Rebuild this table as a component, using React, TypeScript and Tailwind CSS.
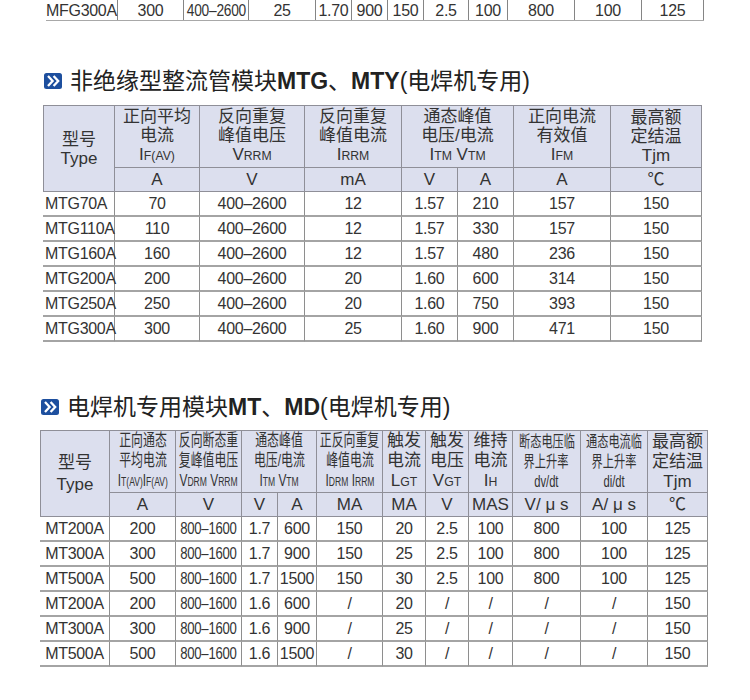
import React from "react";

const FONT = "font-['Liberation_Sans','Noto_Sans_CJK_SC',sans-serif]";

function Icon() {
  return (
    <svg width="18" height="16" viewBox="0 0 18 16" className="shrink-0">
      <rect x="0" y="0" width="18" height="16" rx="2.5" fill="#1d4f9e" />
      <path d="M4 3 L8.6 8 L4 13" stroke="#fff" strokeWidth="2.3" fill="none" strokeLinejoin="miter" />
      <path d="M9.6 3 L14.2 8 L9.6 13" stroke="#fff" strokeWidth="2.3" fill="none" strokeLinejoin="miter" />
    </svg>
  );
}

function Sub({ big, small }: { big: string; small: string }) {
  return (
    <span>
      {big}
      <span className="text-[0.72em]">{small}</span>
    </span>
  );
}

const topCols: [number, string, string][] = [
  [72, "MFG300A", "left"],
  [66, "300", "c"],
  [65, "400–2600", "cond"],
  [67, "25", "c"],
  [36, "1.70", "c"],
  [36, "900", "c"],
  [36, "150", "c"],
  [45, "2.5", "c"],
  [39, "100", "c"],
  [67, "800", "c"],
  [67, "100", "c"],
  [62, "125", "c"],
];

function TopRow() {
  return (
    <div className="ml-[46px] flex h-[21px] w-[658px] border-b border-[#a8a8a8]">
      {topCols.map(([w, t, a], i) => (
        <div
          key={i}
          style={{ width: w }}
          className={`flex h-full shrink-0 items-center border-r border-[#858585] pt-[2px] text-[16px] tracking-[-0.3px] text-[#333] ${
            a === "left" ? "justify-start" : "justify-center"
          }`}
        >
          {a === "cond" ? (
            <span className="inline-block whitespace-nowrap [transform:scaleX(0.86)]">{t}</span>
          ) : (
            <span className="whitespace-nowrap">{t}</span>
          )}
        </div>
      ))}
    </div>
  );
}

function Heading({ children, ml }: { children: React.ReactNode; ml: string }) {
  return (
    <div className={`flex h-[30px] items-center ${ml}`}>
      <Icon />
      <span className="ml-[8px] whitespace-nowrap text-[23px] leading-[30px] text-[#222]">{children}</span>
    </div>
  );
}

const HB = "border-[#8f8f98] bg-[#dcdfee]";
const DB = "border-[#a4a4a4]";
const VB = "border-r-[#8e8e8e]";

function H1Cell({ lines, cls = "" }: { lines: React.ReactNode[]; cls?: string }) {
  return (
    <div
      className={`flex flex-col items-center justify-center border-r border-b border-t ${HB} text-[17px] leading-[19px] text-[#333] ${cls}`}
    >
      {lines.map((l, i) => (
        <div key={i} className="whitespace-nowrap">
          {l}
        </div>
      ))}
    </div>
  );
}

function UnitCell({ t }: { t: React.ReactNode }) {
  return (
    <div className={`flex items-center justify-center border-r border-b ${HB} text-[17px] text-[#333]`}>
      <span className="whitespace-nowrap">{t}</span>
    </div>
  );
}

const t1Data = [
  ["MTG70A", "70", "400–2600", "12", "1.57", "210", "157", "150"],
  ["MTG110A", "110", "400–2600", "12", "1.57", "330", "157", "150"],
  ["MTG160A", "160", "400–2600", "12", "1.57", "480", "236", "150"],
  ["MTG200A", "200", "400–2600", "20", "1.60", "600", "314", "150"],
  ["MTG250A", "250", "400–2600", "20", "1.60", "750", "393", "150"],
  ["MTG300A", "300", "400–2600", "25", "1.60", "900", "471", "150"],
];

function Table1() {
  return (
    <div className="ml-[43px] grid w-[659px] grid-cols-[72px_85px_105px_97px_56px_56px_97px_91px] grid-rows-[63px_24px_repeat(6,25px)]">
      <H1Cell cls="row-span-2 border-l" lines={["型号", "Type"]} />
      <H1Cell lines={["正向平均", "电流", <Sub big="I" small="F(AV)" />]} />
      <H1Cell lines={["反向重复", "峰值电压", <Sub big="V" small="RRM" />]} />
      <H1Cell lines={["反向重复", "峰值电流", <Sub big="I" small="RRM" />]} />
      <H1Cell
        cls="col-span-2"
        lines={[
          "通态峰值",
          "电压/电流",
          <span>
            <Sub big="I" small="TM" /> <Sub big="V" small="TM" />
          </span>,
        ]}
      />
      <H1Cell lines={["正向电流", "有效值", <Sub big="I" small="FM" />]} />
      <H1Cell lines={["最高额", "定结温", "Tjm"]} />
      {["A", "V", "mA", "V", "A", "A", "℃"].map((u, i) => (
        <UnitCell key={i} t={u} />
      ))}
      {t1Data.map((row, r) =>
        row.map((v, c) => (
          <div
            key={`${r}-${c}`}
            className={`flex items-center border-r border-b-2 ${DB} ${VB} text-[16px] tracking-[-0.3px] text-[#333] ${
              c === 0 ? "justify-start pl-[2px]" : "justify-center"
            }`}
          >
            <span className="whitespace-nowrap">{v}</span>
          </div>
        ))
      )}
    </div>
  );
}

function H2Cell({
  lines,
  cls = "",
  cond = "",
}: {
  lines: React.ReactNode[];
  cls?: string;
  cond?: string;
}) {
  return (
    <div
      className={`flex flex-col items-center justify-center border-r border-b border-t ${HB} leading-[20px] text-[#333] ${
        cond || "text-[17px]"
      } ${cls}`}
    >
      {lines.map((l, i) => (
        <div
          key={i}
          className={`whitespace-nowrap ${cond ? "inline-block [transform:scaleX(0.7)]" : ""}`}
        >
          {l}
        </div>
      ))}
    </div>
  );
}

const t2Data = [
  ["MT200A", "200", "800–1600", "1.7", "600", "150", "20", "2.5", "100", "800", "100", "125"],
  ["MT300A", "300", "800–1600", "1.7", "900", "150", "25", "2.5", "100", "800", "100", "125"],
  ["MT500A", "500", "800–1600", "1.7", "1500", "150", "30", "2.5", "100", "800", "100", "125"],
  ["MT200A", "200", "800–1600", "1.6", "600", "/", "20", "/", "/", "/", "/", "150"],
  ["MT300A", "300", "800–1600", "1.6", "900", "/", "25", "/", "/", "/", "/", "150"],
  ["MT500A", "500", "800–1600", "1.6", "1500", "/", "30", "/", "/", "/", "/", "150"],
];

function Table2() {
  return (
    <div className="ml-[40px] grid w-[668px] grid-cols-[70px_66px_66px_36px_39px_66px_43px_43px_44px_68px_67px_60px] grid-rows-[63px_24px_repeat(6,25px)]">
      <H2Cell cls="row-span-2 border-l leading-[22px]" lines={["型号", "Type"]} />
      <H2Cell
        cond="text-[17px]"
        lines={[
          "正向通态",
          "平均电流",
          <span>
            <Sub big="I" small="T(AV)" />
            <Sub big="I" small="F(AV)" />
          </span>,
        ]}
      />
      <H2Cell
        cond="text-[17px]"
        lines={[
          "反向断态重",
          "复峰值电压",
          <span>
            <Sub big="V" small="DRM" /> <Sub big="V" small="RRM" />
          </span>,
        ]}
      />
      <H2Cell
        cls="col-span-2"
        cond="text-[17px]"
        lines={[
          "通态峰值",
          "电压/电流",
          <span>
            <Sub big="I" small="TM" /> <Sub big="V" small="TM" />
          </span>,
        ]}
      />
      <H2Cell
        cond="text-[17px]"
        lines={[
          "正反向重复",
          "峰值电流",
          <span>
            <Sub big="I" small="DRM" /> <Sub big="I" small="RRM" />
          </span>,
        ]}
      />
      <H2Cell lines={["触发", "电流", <Sub big="L" small="GT" />]} />
      <H2Cell lines={["触发", "电压", <Sub big="V" small="GT" />]} />
      <H2Cell lines={["维持", "电流", <Sub big="I" small="H" />]} />
      <H2Cell cond="text-[16px]" lines={["断态电压临", "界上升率", "dv/dt"]} />
      <H2Cell cond="text-[16px]" lines={["通态电流临", "界上升率", "di/dt"]} />
      <H2Cell lines={["最高额", "定结温", "Tjm"]} />
      {["A", "V", "V", "A", "MA", "MA", "V", "MAS", "V/ μ s", "A/ μ s", "℃"].map((u, i) => (
        <UnitCell key={i} t={u} />
      ))}
      {t2Data.map((row, r) =>
        row.map((v, c) => (
          <div
            key={`${r}-${c}`}
            className={`flex items-center justify-center border-r border-b-2 ${DB} ${VB} text-[16px] tracking-[-0.3px] text-[#333]`}
          >
            {c === 2 ? (
              <span className="inline-block whitespace-nowrap [transform:scaleX(0.82)]">{v}</span>
            ) : (
              <span className="whitespace-nowrap">{v}</span>
            )}
          </div>
        ))
      )}
    </div>
  );
}

export default function App() {
  return (
    <div className={`relative h-[700px] w-[750px] overflow-hidden bg-white ${FONT}`}>
      <TopRow />
      <div className="mt-[45px]">
        <Heading ml="ml-[44px]">
          非绝缘型整流管模块<b>MTG</b>、<b>MTY</b>(电焊机专用)
        </Heading>
      </div>
      <div className="mt-[9px]">
        <Table1 />
      </div>
      <div className="mt-[50px]">
        <Heading ml="ml-[41px]">
          电焊机专用模块<b>MT</b>、<b>MD</b>(电焊机专用)
        </Heading>
      </div>
      <div className="mt-[8px]">
        <Table2 />
      </div>
    </div>
  );
}
